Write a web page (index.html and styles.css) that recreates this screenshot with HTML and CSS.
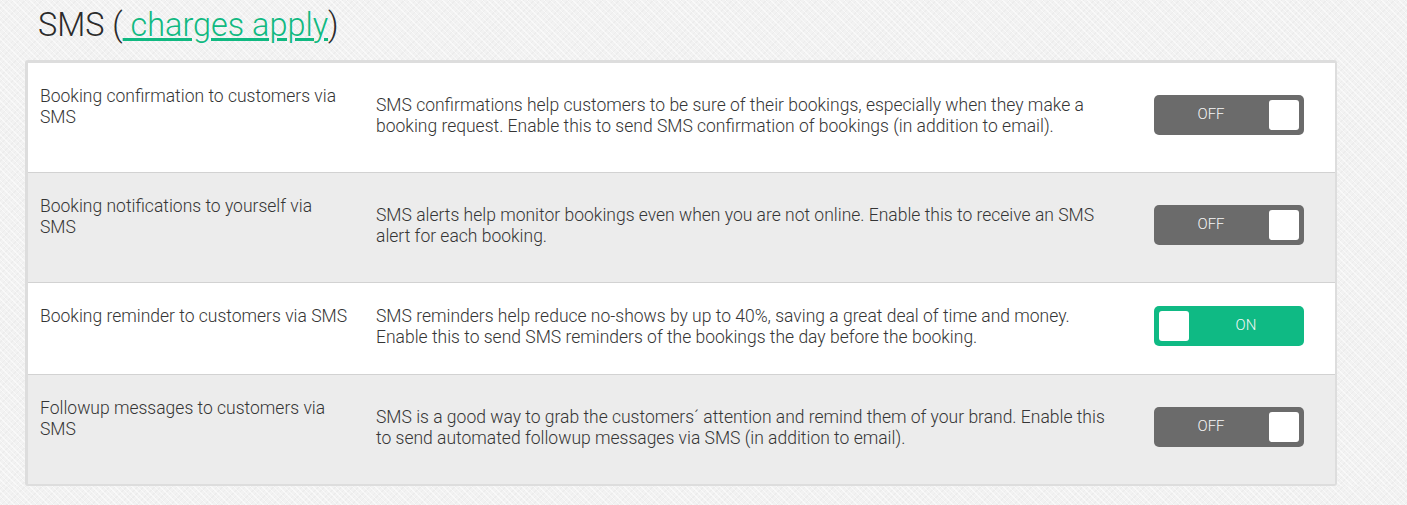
FILE: index.html
```html
<!DOCTYPE html>
<html>
  <head>
    <link rel="stylesheet" href="styles.css">
  </head>
  <body>
    <div class="page">
      <h1 class="heading">SMS (<a href="#">&nbsp;charges apply</a>)</h1>

      <div class="panel">
        <div class="setting">
          <div class="setting-label">Booking confirmation to customers via SMS</div>
          <div class="setting-desc">
            SMS confirmations help customers to be sure of their bookings, especially when they make a
            booking request. Enable this to send SMS confirmation of bookings (in addition to email).
          </div>
          <div class="toggle">
            <span class="toggle-text">OFF</span>
            <span class="toggle-knob"></span>
          </div>
        </div>

        <div class="setting alt">
          <div class="setting-label">Booking notifications to yourself via SMS</div>
          <div class="setting-desc">
            SMS alerts help monitor bookings even when you are not online. Enable this to receive an SMS
            alert for each booking.
          </div>
          <div class="toggle">
            <span class="toggle-text">OFF</span>
            <span class="toggle-knob"></span>
          </div>
        </div>

        <div class="setting">
          <div class="setting-label">Booking reminder to customers via SMS</div>
          <div class="setting-desc">
            SMS reminders help reduce no-shows by up to 40%, saving a great deal of time and money.
            Enable this to send SMS reminders of the bookings the day before the booking.
          </div>
          <div class="toggle on">
            <span class="toggle-text">ON</span>
            <span class="toggle-knob"></span>
          </div>
        </div>

        <div class="setting alt">
          <div class="setting-label">Followup messages to customers via SMS</div>
          <div class="setting-desc">
            SMS is a good way to grab the customers´ attention and remind them of your brand. Enable this
            to send automated followup messages via SMS (in addition to email).
          </div>
          <div class="toggle">
            <span class="toggle-text">OFF</span>
            <span class="toggle-knob"></span>
          </div>
        </div>
      </div>
    </div>
  </body>
</html>
```

FILE: styles.css
```css
body {
  margin: 0;
  font-family: Roboto, "Liberation Sans", sans-serif;
  color: #353535;
  background-color: #f2f2f2;
  background-image: repeating-linear-gradient(45deg, rgba(255, 255, 255, 0.5) 0 1px, transparent 1px 4px),
    repeating-linear-gradient(-45deg, rgba(0, 0, 0, 0.025) 0 1px, transparent 1px 4px);
}

.page {
  padding: 7px 0 0 25px;
  width: 1312px;
}

.heading {
  margin: 0 0 17px;
  padding-left: 13px;
  font-size: 32.4px;
  font-weight: 300;
  line-height: 36px;
  color: #2b2b2b;
}

.heading a {
  color: #10b981;
  text-decoration: underline;
}

.panel {
  border-style: solid;
  border-color: #dddddd;
  border-width: 3px 2px 2px 3px;
  border-radius: 3px;
  background-color: #ffffff;
}

.setting {
  display: flex;
  align-items: center;
  padding: 23px 31px 26px 12px;
  font-size: 17.5px;
  font-weight: 300;
  line-height: 21px;
  background-color: #ffffff;
}

.setting + .setting {
  border-top: 1px solid #d2d2d2;
}

.setting.alt {
  background-color: #ececec;
}

.setting-label {
  align-self: flex-start;
  width: 310px;
  padding-right: 26px;
  padding-bottom: 18px;
  flex-shrink: 0;
}

.setting-desc {
  flex: 1;
}

.toggle {
  display: flex;
  align-items: center;
  flex-shrink: 0;
  margin: 0 0 2px 40px;
  width: 150px;
  height: 40px;
  padding: 5px;
  box-sizing: border-box;
  border-radius: 5px;
  background-color: #6b6b6b;
}

.toggle.on {
  flex-direction: row-reverse;
  background-color: #0fba84;
}

.toggle-text {
  flex: 1;
  margin: 0 6px 2px 0;
  text-align: center;
  color: #f7f7f7;
  font-size: 15px;
  font-weight: 300;
}

.toggle.on .toggle-text {
  margin: 0 0 2px 4px;
}

.toggle-knob {
  width: 30px;
  height: 30px;
  border-radius: 3px;
  background-color: #ffffff;
}
```
